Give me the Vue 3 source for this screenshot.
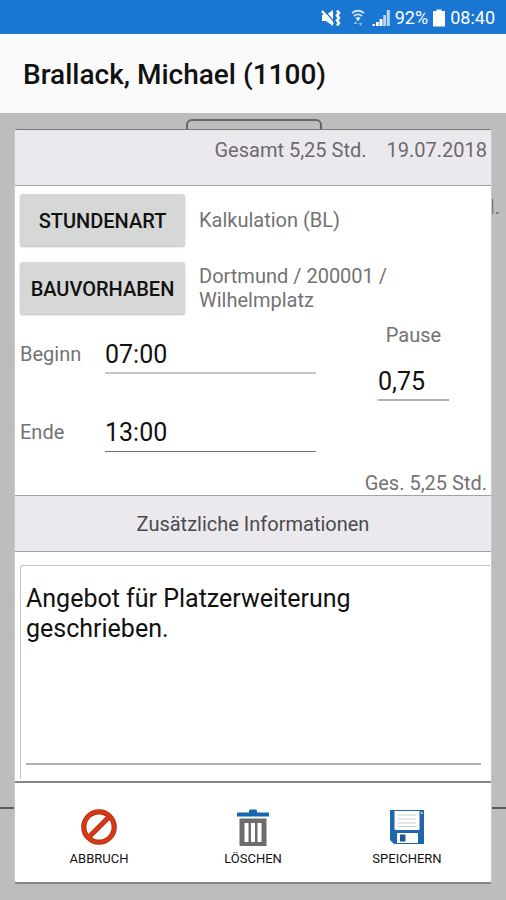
<script setup>
import { ref } from 'vue'

const begin = ref('07:00')
const end = ref('13:00')
const pause = ref('0,75')
const note = ref('Angebot für Platzerweiterung geschrieben.')
</script>

<template>
  <div class="screen">
    <div class="status">
      <svg class="s-icon mute" viewBox="0 0 20 18" aria-hidden="true">
        <path d="M1 6h4l7-5v16l-7-5H1z" fill="#fff" />
        <path d="M3 1l11 13" stroke="#1976d2" stroke-width="1.2" />
        <path d="M1 2l11 13" stroke="#fff" stroke-width="2.400" />
        <path d="M16 1.500l2 2.500-2 2.500 2 2.500-2 2.500 2 2.500-2 2.500" stroke="#fff" stroke-width="2.600" fill="none" />
      </svg>
      <svg class="s-icon wifi" viewBox="0 0 14 18" aria-hidden="true">
        <g fill="none" stroke="#d3e5f7" stroke-width="1.800">
          <path d="M1 4q6-4.500 12 0" />
          <path d="M3 7q4-3.200 8 0" />
          <path d="M5 9.800q2-1.800 4 0" />
        </g>
        <path d="M5.500 9.500h3L7 12.500z" fill="#fff" />
        <path d="M2.500 15L4.500 12l2 3zM7.500 14l2 3 2-3z" fill="#8fbbe8" />
      </svg>
      <svg class="s-icon signal" viewBox="0 0 18 18" aria-hidden="true">
        <path d="M0.500 15h2.500v2H0.500zM4 13h2.800v4H4zM7.500 10h3v7h-3z" fill="#fff" />
        <path d="M11.200 6H14v11h-2.800zM14.800 1h3v16h-3z" fill="#b9d5f1" />
      </svg>
      <span>92%</span>
      <svg class="s-icon battery" viewBox="0 0 12 18" aria-hidden="true">
        <path d="M3.500 0.500h5V2H12v15.500H0V2h3.500z" fill="#fff" />
      </svg>
      <span>08:40</span>
    </div>

    <header class="appbar">
      <h1>Brallack, Michael (1100)</h1>
    </header>

    <main class="stage">
      <div class="behind-box"></div>
      <div class="behind-text">l.</div>
      <div class="behind-line"></div>

      <form class="dialog" @submit.prevent>
        <div class="band summary">
          <span>Gesamt 5,25 Std.</span>
          <span>19.07.2018</span>
        </div>

        <div class="fields">
          <div class="pick">
            <button type="button" class="pick-btn">STUNDENART</button>
            <span>Kalkulation (BL)</span>
          </div>
          <div class="pick">
            <button type="button" class="pick-btn">BAUVORHABEN</button>
            <span>Dortmund / 200001 / Wilhelmplatz</span>
          </div>

          <div class="times">
            <div class="span">
              <div class="time-row">
                <label for="begin">Beginn</label>
                <input id="begin" v-model="begin" class="line light" type="text" />
              </div>
              <div class="time-row">
                <label for="end">Ende</label>
                <input id="end" v-model="end" class="line" type="text" />
              </div>
            </div>
            <div class="pause">
              <label for="pause">Pause</label>
              <input id="pause" v-model="pause" class="line mid" type="text" />
            </div>
          </div>

          <div class="total">Ges. 5,25 Std.</div>
        </div>

        <label class="band info" for="note">Zusätzliche Informationen</label>

        <div class="note-area">
          <div class="note-frame">
            <textarea id="note" v-model="note"></textarea>
          </div>
        </div>

        <div class="actions">
          <button type="button" class="action">
            <svg viewBox="0 0 36 36" aria-hidden="true">
              <g fill="none" stroke="#b62a10" stroke-width="5.200">
                <circle cx="18" cy="18" r="15.200" />
                <path d="M8 28L28 8" />
              </g>
              <g fill="none" stroke="#d43a18" stroke-width="3.600">
                <circle cx="18" cy="18" r="15.200" />
                <path d="M8 28L28 8" />
              </g>
            </svg>
            <span>ABBRUCH</span>
          </button>
          <button type="button" class="action">
            <svg viewBox="0 0 36 36" aria-hidden="true">
              <path d="M2 4.500Q2 3.500 3 3.500h11V2q0-1.500 1.500-1.500h5Q22 0.500 22 2v1.500h11q1 0 1 1V7.500H2z" fill="#1767b0" />
              <path d="M4.500 9.500h27V37h-27z" fill="#6c6c6c" />
              <path d="M9.500 14h4v19h-4zM16 14h4v19h-4zM22.500 14h4v19h-4z" fill="#fff" />
            </svg>
            <span>LÖSCHEN</span>
          </button>
          <button type="button" class="action">
            <svg viewBox="0 0 36 36" aria-hidden="true">
              <path d="M1 1h34v34H5l-4-4z" fill="#1f66ad" />
              <path d="M5.500 2h25v18q0 1-1 1h-23q-1 0-1-1z" fill="#fff" />
              <path d="M9 6h18M9 10h18M9 14h18M9 17.500h18" stroke="#cfcfcf" stroke-width="1" />
              <path d="M8 24h21v10H8z" fill="#fff" />
              <path d="M11 25.500h5.500v7H11z" fill="#1f5592" />
              <path d="M32 3h1.500v2H32z" fill="#dce8f4" />
            </svg>
            <span>SPEICHERN</span>
          </button>
        </div>
      </form>
    </main>
  </div>
</template>

<style>
body {
  margin: 0;
}
</style>

<style scoped>
.screen,
.screen * {
  box-sizing: border-box;
}

.screen {
  display: flex;
  flex-direction: column;
  min-height: 100vh;
  font-family: Roboto, "Liberation Sans", sans-serif;
  font-size: 20px;
  line-height: 24px;
  color: #737373;
  background: #bdbdbd;
}

.status {
  display: flex;
  align-items: center;
  justify-content: flex-end;
  gap: 5px;
  height: 34px;
  padding: 2px 11px 0 0;
  background: #1976d2;
  color: #fff;
  font-size: 18px;
}

.s-icon {
  height: 18px;
}

.mute {
  width: 20px;
}

.wifi {
  width: 14px;
  margin: 0 2px 0 5px;
}

.signal {
  width: 18px;
}

.battery {
  width: 12px;
}

.appbar {
  display: flex;
  align-items: center;
  height: 79px;
  padding: 3px 23px 0;
  background: #fafafa;
}

h1 {
  margin: 0;
  font-size: 28px;
  line-height: 32px;
  font-weight: 500;
  color: #111;
}

.stage {
  position: relative;
  display: flex;
  flex: 1;
  padding: 16px 14px;
}

.behind-box {
  position: absolute;
  top: 6px;
  left: 50%;
  width: 136px;
  height: 24px;
  margin-left: -67px;
  border: 2px solid #666;
  border-radius: 6px;
}

.behind-text {
  position: absolute;
  top: 82px;
  right: 6px;
}

.behind-line {
  position: absolute;
  bottom: 91px;
  left: 0;
  right: 0;
  height: 2px;
  background: #5c5c5c;
}

.dialog {
  position: relative;
  display: flex;
  flex: 1;
  flex-direction: column;
  border: 1px solid #c8c8c8;
  border-top-color: #777;
  border-bottom: 2px solid #858585;
  border-radius: 3px;
  background: #fff;
}

.band {
  display: flex;
  background: #ece9ee;
}

.summary {
  justify-content: flex-end;
  gap: 20px;
  height: 56px;
  padding: 8px 4px 0;
  border-bottom: 1px solid #a3a3a3;
  color: #6c6a6e;
}

.info {
  align-items: center;
  justify-content: center;
  height: 57px;
  border-top: 1px solid #a3a3a3;
  border-bottom: 1px solid #a3a3a3;
  color: #4b494d;
}

.fields {
  padding: 8px 4px 0 5px;
}

.pick {
  display: flex;
  align-items: center;
  gap: 14px;
  height: 52px;
  margin-bottom: 16px;
}

.pick span {
  flex: 1;
  max-width: 210px;
}

.pick-btn {
  width: 165px;
  height: 52px;
  padding: 2px 0 0;
  border: 0;
  border-radius: 3px;
  background: #d6d7d7;
  box-shadow: 0 1px 2px #bbb;
  font: 500 20px/24px Roboto, "Liberation Sans", sans-serif;
  color: #111;
}

.times {
  display: flex;
  gap: 62px;
  padding-right: 38px;
}

.span {
  display: flex;
  flex: 1;
  flex-direction: column;
  gap: 38px;
  padding-top: 4px;
}

.time-row {
  display: flex;
  align-items: center;
}

.time-row label {
  flex: 0 0 85px;
}

.line {
  width: 100%;
  min-width: 0;
  height: 40px;
  padding: 2px 0 0;
  border: 0;
  border-bottom: 1px solid #6e6e6e;
  border-radius: 0;
  outline: 0;
  background: transparent;
  font: 400 25px/30px Roboto, "Liberation Sans", sans-serif;
  color: #111;
}

.light {
  border-bottom: 2px solid #c6c6c6;
}

.mid {
  border-bottom: 2px solid #b0b0b0;
}

.pause {
  display: flex;
  flex: 0 0 71px;
  flex-direction: column;
  align-items: center;
  gap: 14px;
  margin-top: -7px;
}

.total {
  margin-top: 19px;
  text-align: right;
}

.note-area {
  display: flex;
  flex: 1;
  padding: 13px 1px 2px 5px;
}

.note-frame {
  display: flex;
  flex: 1;
  padding: 0 9px 14px 5px;
  border-top: 1px solid #c4c4c4;
  border-left: 1px solid #c4c4c4;
  border-radius: 3px 0 0 0;
}

textarea {
  flex: 1;
  min-width: 0;
  padding: 18px 80px 0 0;
  border: 0;
  border-bottom: 2px solid #b0b0b0;
  border-radius: 0;
  outline: 0;
  resize: none;
  background: transparent;
  font: 400 25px/30px Roboto, "Liberation Sans", sans-serif;
  color: #111;
}

.actions {
  display: flex;
  justify-content: space-between;
  height: 101px;
  padding: 0 28px;
  border-top: 2px solid #858585;
}

.action {
  display: flex;
  flex-direction: column;
  align-items: center;
  gap: 4px;
  width: 112px;
  padding: 26px 0 0;
  border: 0;
  background: transparent;
  font: 400 13px/20px Roboto, "Liberation Sans", sans-serif;
  color: #111;
}

.action svg {
  width: 36px;
  height: 36px;
  overflow: visible;
}
</style>
